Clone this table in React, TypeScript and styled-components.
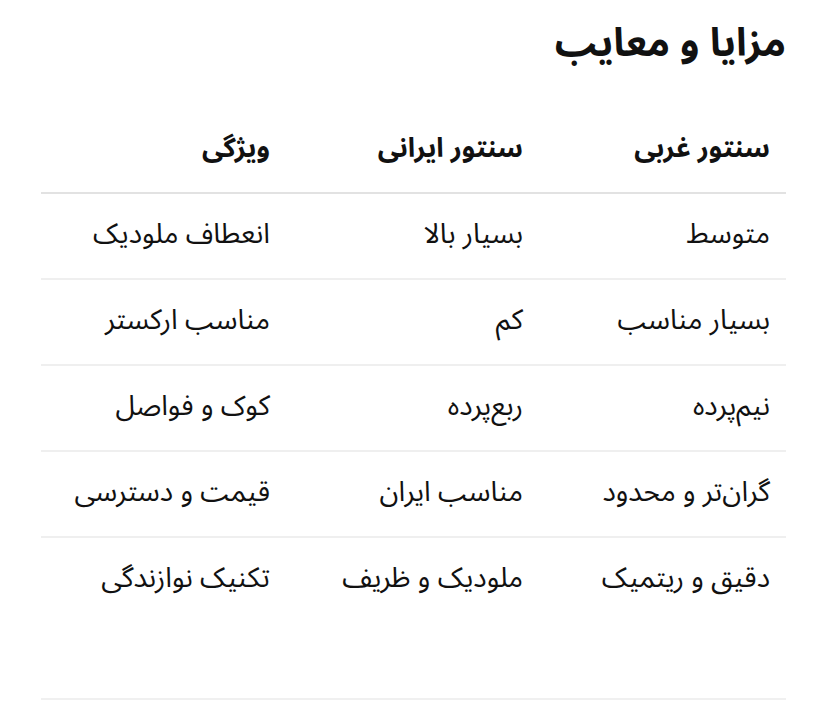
import styled, { createGlobalStyle } from "styled-components";

const GlobalStyle = createGlobalStyle`
  html, body {
    margin: 0;
    background: #ffffff;
  }
  body {
    font-family: "Noto Sans Arabic", "Noto Naskh Arabic", "Noto Sans", "DejaVu Sans", sans-serif;
    color: #111111;
  }
`;

const Page = styled.div`
  direction: rtl;
  padding: 20px 42px 0 41px;
`;

const Title = styled.h2`
  margin: 0 0 40px;
  font-size: 39px;
  font-weight: 700;
  line-height: 48px;
`;

const Table = styled.div`
  display: grid;
  grid-template-columns: 247px 253px 245px;
  border-bottom: 2px solid #f0f0f0;
`;

const Cell = styled.div<{ $head?: boolean }>`
  display: flex;
  align-items: center;
  box-sizing: border-box;
  height: 86px;
  padding: 0 16px ${(p) => (p.$head ? 3 : 4)}px;
  font-size: ${(p) => (p.$head ? 27 : 28)}px;
  font-weight: ${(p) => (p.$head ? 700 : 400)};
  border-bottom: 2px solid ${(p) => (p.$head ? "#e2e2e2" : "#efefef")};
  white-space: nowrap;
`;

const Spacer = styled.div`
  grid-column: 1 / -1;
  height: 76px;
  margin-top: -2px;
  background: #ffffff;
`;

const head = ["سنتور غربی", "سنتور ایرانی", "ویژگی"];

const rows = [
  ["متوسط", "بسیار بالا", "انعطاف ملودیک"],
  ["بسیار مناسب", "کم", "مناسب ارکستر"],
  ["نیم‌پرده", "ربع‌پرده", "کوک و فواصل"],
  ["گران‌تر و محدود", "مناسب ایران", "قیمت و دسترسی"],
  ["دقیق و ریتمیک", "ملودیک و ظریف", "تکنیک نوازندگی"],
];

export default function App() {
  return (
    <>
      <GlobalStyle />
      <Page>
        <Title>مزایا و معایب</Title>
        <Table>
          {head.map((h) => (
            <Cell $head key={h}>
              {h}
            </Cell>
          ))}
          {rows.map((r) =>
            r.map((c) => <Cell key={c}>{c}</Cell>)
          )}
          <Spacer />
        </Table>
      </Page>
    </>
  );
}
